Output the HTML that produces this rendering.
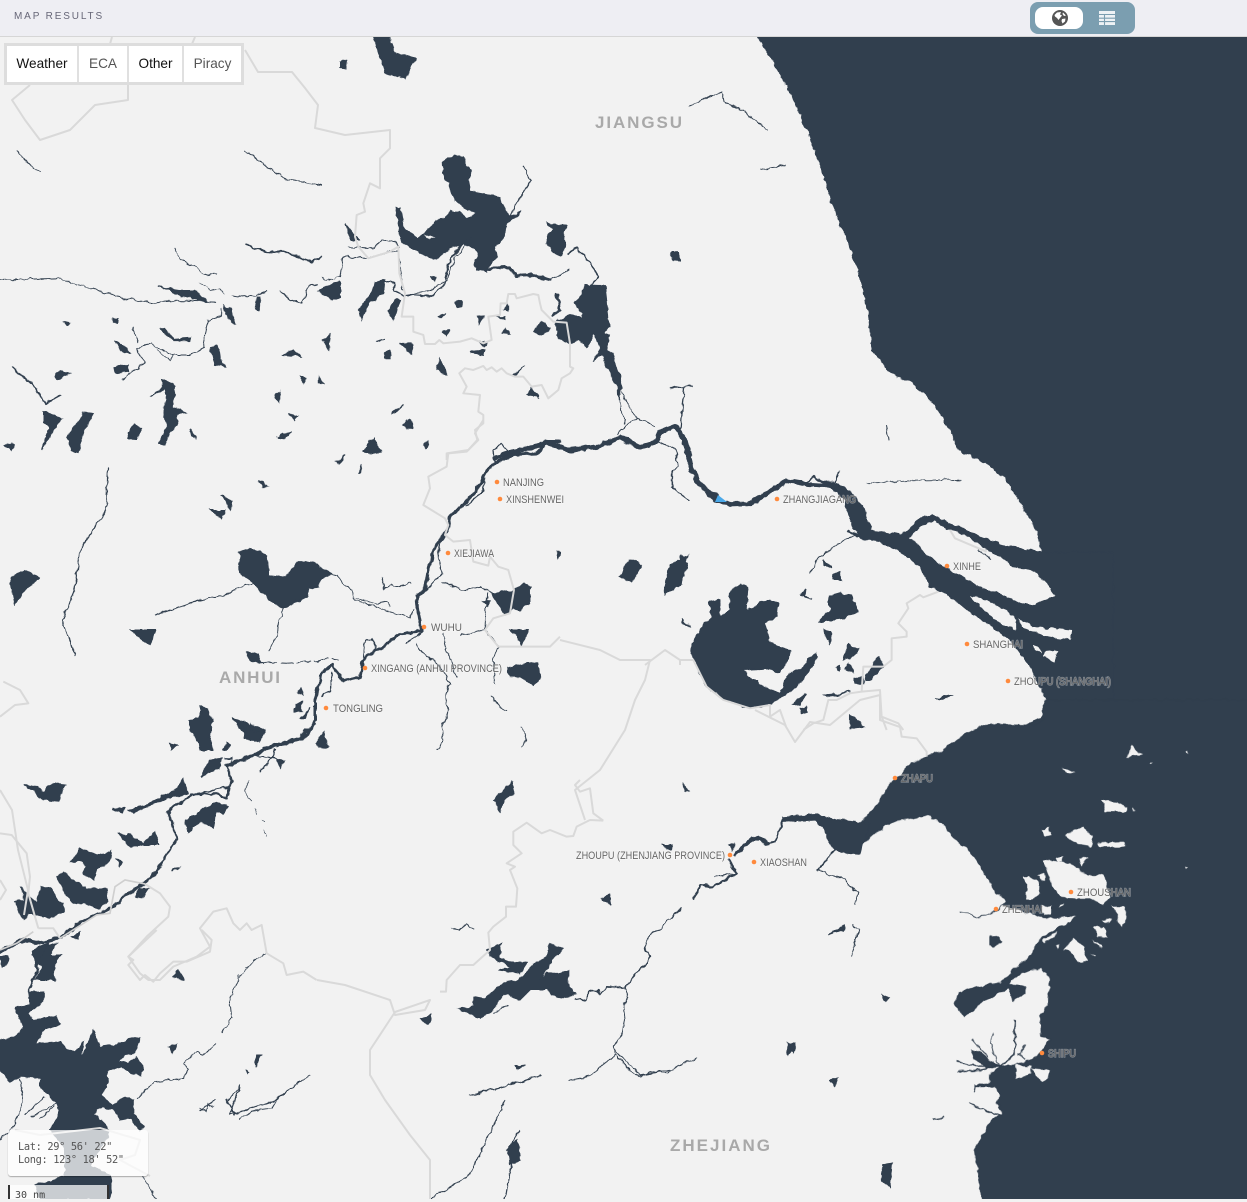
<!DOCTYPE html>
<html lang="en"><head><meta charset="utf-8"><title>Map Results</title>
<style>
html,body{margin:0;padding:0;width:1247px;height:1199px;overflow:hidden;background:#f2f2f2;font-family:"Liberation Sans",sans-serif}
svg.map{position:absolute;left:0;top:0}
.hdr{position:absolute;left:0;top:0;width:1247px;height:36px;background:#eeeef3;border-bottom:1px solid #d6d6d6}
.ttl{position:absolute;left:14px;top:11px;font-size:10px;line-height:12px;letter-spacing:1.85px;color:#667}
.tog{position:absolute;left:1030px;top:2px;width:105px;height:32px;background:#7b9eb0;border-radius:8px}
.pill{position:absolute;left:5px;top:5px;width:48px;height:22px;background:#fff;border-radius:8px}
.panel{position:absolute;left:4px;top:43px;width:240px;height:42px;box-sizing:border-box;background:#e0e0e0;border:3px solid #ddd}
.c{position:absolute;top:0;height:36px;background:#fff;text-align:center;font-size:13.6px;line-height:35px;color:#555}
.box{position:absolute;left:8px;top:1130px;width:140px;height:46px;box-sizing:border-box;background:rgba(255,255,255,.74);border-radius:3px;box-shadow:0 1px 1px rgba(0,0,0,.3);padding:11px 0 0 10px;font:10.35px/13px "DejaVu Sans Mono","Liberation Mono",monospace;letter-spacing:-.35px;color:#555;white-space:pre}
.sc{position:absolute;left:8px;top:1185px;width:101px;height:14px;box-sizing:border-box;background:rgba(255,255,255,.74);border-left:2px solid #333;border-right:2px solid #333;padding:5px 0 0 5px;font:10px/12px "DejaVu Sans Mono","Liberation Mono",monospace;color:#444}
.d path,.d circle{fill:#313f4e;stroke:#313f4e;stroke-width:1;vector-effect:non-scaling-stroke}
.d path *{vector-effect:non-scaling-stroke}
.l path{fill:#f2f2f2;stroke:none}
.r path{fill:none;stroke:#313f4e;stroke-linejoin:round;stroke-linecap:round}
.b path{fill:none;stroke:#d9d9d9;stroke-width:2;stroke-linejoin:round}
text.n{font-family:"Liberation Sans",sans-serif;font-size:11px;fill:#666;stroke:rgba(255,255,255,.4);stroke-width:1.3px;paint-order:stroke}
text.t{font-family:"Liberation Sans",sans-serif;font-weight:bold;font-size:17px;fill:#a9a9a9}
circle.o{fill:#ff8a3d}
</style></head><body>
<svg class="map" width="1247" height="1199" viewBox="0 0 1247 1199" xmlns="http://www.w3.org/2000/svg">
<defs><filter id="rough" filterUnits="userSpaceOnUse" x="-30" y="-30" width="1307" height="1259" color-interpolation-filters="sRGB"><feTurbulence type="fractalNoise" baseFrequency="0.14" numOctaves="2" seed="7" result="n"/><feDisplacementMap in="SourceGraphic" in2="n" scale="5" xChannelSelector="R" yChannelSelector="G"/></filter></defs>
<rect width="1247" height="1199" fill="#f2f2f2"/>

<g filter="url(#rough)">
<!-- open sea, absolute coordinates -->
<g class="d"><path d="M748 15 758 37 772 60 790 92 805 125 820 165 833 205 845 235 858 270 868 310 872 350 890 372 915 385 935 405 950 430 958 450 970 455 985 462 1005 478 1022 505 1035 528 1042 552 1100 552 1100 740 1280 740 1280 15z"/>
<path d="M664 595 670 565 688 555 680 585z"/><path d="M620 577 630 559 642 565 632 582z"/>
<path d="M368 25 385 25 395 52 415 58 405 79 385 72 378 50z"/><path d="M340 62 347 61 346 69 340 68z"/>
<path d="M671 252 680 252 679 261 672 260z"/>
<path d="M10 578 25 570 40 578 25 590 15 605z"/><path d="M130 630 155 630 150 645z"/></g>
<g class="r"><path stroke-width="1" d="M245 150 282 178 322 185"/><path stroke-width="1" d="M18 152 30 165 40 172"/>
<path stroke-width="1" d="M690 105 708 98 722 92 724 102 742 110 768 130"/><path stroke-width="1" d="M760 170 785 165"/>
<path stroke-width="1" d="M886 425 888 440"/>
<path stroke-width="1.2" d="M108 468 106 510 80 550 75 590 62 620 75 655M155 615 200 600"/>
<path stroke-width="5" d="M495 458 512 452 548 443 570 450 600 446 620 437 640 447 655 443 660 432 675 426 685 440 692 470 700 485 718 498"/>
<path stroke-width="1.3" d="M672 388 692 386M684 388 680 430"/><path stroke-width="1.2" d="M655 440 676 450 678 466 672 470 672 488 690 500"/>
</g>

<!-- zoom (0,240) north Anhui -->
<g transform="translate(0 240) scale(.3333)">
<g class="d"><path d="M475 140 540 150 585 150 625 185 540 170 510 150z"/><path d="M772 170 780 170 778 210 765 210z"/><path d="M955 155 1000 130 1020 125 1020 170 1000 180z"/><path d="M670 195 695 210 705 255 685 235z"/><path d="M480 268 495 265 520 295 570 292 570 302 520 302z"/><path d="M345 305 375 320 390 340 360 330z"/><path d="M342 380 385 375 388 395 345 400z"/><path d="M340 233 353 233 352 250 340 250z"/><path d="M192 245 210 248 200 256z"/><path d="M175 395 210 400 170 420 165 410z"/><path d="M132 512 185 535 155 580 125 630 150 565 132 550z"/><path d="M200 590 240 540 250 518 280 520 250 575 235 635 215 630z"/><path d="M380 595 400 555 425 565 408 597z"/><path d="M485 415 525 440 520 500 560 518 530 525 535 550 505 585 495 618 478 612 500 560 490 510 500 470 495 445 450 470 490 440z"/><path d="M630 320 650 315 665 365 677 380 645 375z"/><path d="M570 568 590 595 575 590z"/><path d="M25 610 40 612 35 630 15 615z"/><path d="M850 345 880 330 905 350z"/><path d="M900 410 918 415 910 428z"/><path d="M958 412 972 432 958 430z"/><path d="M825 475 838 455 838 488z"/><path d="M870 522 895 530 885 540z"/><path d="M832 595 850 577 868 580 855 598z"/><path d="M968 300 992 283 985 330z"/><path d="M1008 665 1020 660 1020 670z"/></g>
<g class="r"><path stroke-width="3" d="M0 120 170 115 370 175 450 188 540 182 650 185"/><path stroke-width="3" d="M525 28 540 55 590 85 615 105 650 100"/><path stroke-width="6" d="M740 15 800 35 860 38 935 65 965 50"/><path stroke-width="2" d="M600 128 630 150 660 145 675 163"/><path stroke-width="3" d="M698 165 745 172 800 155"/><path stroke-width="4" d="M840 152 880 185 905 192 925 140 950 133"/><path stroke-width="2" d="M965 110 990 120 1020 110"/><path stroke-width="3" d="M665 205 665 225 625 240 610 295 612 325 570 345 520 345 480 325 450 312 430 315 410 325 432 370 365 418M472 330 510 362 520 345M398 265 415 305"/><path stroke-width="5" d="M38 380 65 405 95 430 135 490 180 465"/></g>
</g>

<!-- zoom (680,460) estuary / Taihu -->
<g transform="translate(680 460) scale(.3333)">
<g class="d"><path d="M1085 277 1000 262 920 240 850 205 790 183 755 165 720 178 680 212 665 225 575 210 555 150 520 100 470 70 420 60 495 115 495 140 520 205 540 235 600 245 660 275 720 320 750 380 800 400 860 450 930 495 1000 550 1050 620 1075 670 1100 720 1095 760 1040 800 1300 800 1300 277z"/>
<path d="M30 565 60 510 95 470 90 425 120 420 118 470 150 450 148 400 180 372 205 385 200 450 240 430 270 422 295 430 290 470 255 490 265 540 280 555 330 570 325 600 295 640 270 625 190 630 215 660 235 660 250 680 300 700 325 640 370 625 385 595 410 578 415 590 390 630 350 680 300 715 250 738 190 742 130 715 80 680 45 610z"/>
<path d="M5 480 35 500 10 490z"/><path d="M365 405 395 415 375 410 378 385z"/><path d="M415 488 450 450 445 410 480 400 515 405 535 455 490 475 450 480z"/><path d="M432 510 455 510 450 550 435 530z"/><path d="M460 345 480 335 482 360 458 360z"/><path d="M430 300 455 322 432 315z"/><path d="M490 600 505 550 538 570 515 590z"/><path d="M555 660 575 620 595 590 610 620 570 660z"/><path d="M465 620 480 615 480 630z"/><path d="M495 630 505 610 520 635z"/><path d="M525 655 550 655 550 670 525 670z"/><path d="M430 708 510 695 440 712z"/><path d="M765 715 820 705 790 718z"/><path d="M335 735 375 700 360 735z"/><path d="M360 745 380 740 385 755 365 760z"/><path d="M0 285 22 310 10 350 0 350z"/><path d="M510 765 540 790 555 800 510 805z"/></g>
<g class="l"><path d="M690 230 730 195 765 182 800 205 830 212 880 240 920 270 970 295 1000 320 1060 330 1100 370 1125 405 1060 435 1030 435 960 400 900 380 840 345 800 325 760 300 720 262z"/>
<path d="M870 408 895 410 930 430 980 450 1010 480 1010 510 960 490 900 440z"/>
<path d="M1015 475 1060 500 1175 510 1170 540 1100 530 1030 505z"/><path d="M1060 555 1075 560 1085 580 1065 570z"/><path d="M1095 575 1135 570 1125 605 1090 590z"/></g>
<g class="r"><path stroke-width="14" d="M25 0 50 60 105 120 150 132 210 130 260 100 320 62 380 72 470 78"/><path stroke-width="5" d="M380 70 400 50 445 70M465 72 478 35"/><path stroke-width="2.5" d="M560 70 700 62 845 58"/><path stroke-width="3" d="M390 340 420 290 500 235 530 225"/><path stroke-width="6" d="M505 215 540 230"/><path stroke-width="3" d="M895 270 935 295"/></g>
</g>

<!-- zoom (900,720) bay, Zhoushan, Ningbo -->
<g transform="translate(900 720) scale(.3333)">
<g class="d"><path d="M430 0 400 15 300 15 250 18 195 40 125 95 75 110 20 140 0 165 -15 175 -60 240 -120 315 -186 390 -120 375 -45 315 0 300 40 295 85 285 130 315 180 370 220 405 260 470 290 520 320 545 310 555 420 590 470 595 530 585 510 610 470 625 430 650 405 680 400 700 340 750 310 780 300 790 235 800 180 815 165 850 175 875 195 890 240 850 300 815 325 805 340 840 375 820 375 798 325 795 350 765 420 745 450 770 445 850 420 890 425 950 450 960 420 1000 395 1020 345 1035 300 1040 270 1065 270 1090 225 1095 220 1120 225 1100 285 1100 300 1130 290 1150 310 1180 275 1200 225 1290 255 1500 1140 1500 1140 -60 430 -60z"/></g>
<g class="l"><path d="M685 105 695 75 710 95 730 100 700 105 680 115z"/><path d="M748 125 760 125 750 132z"/><path d="M858 95 865 90 865 102z"/><path d="M485 140 525 160 500 160z"/><path d="M605 240 650 245 680 262 680 275 615 275z"/><path d="M700 265 708 275 700 272z"/>
<path d="M425 330 445 322 455 345 435 350z"/><path d="M495 345 550 322 580 350 575 380 530 372z"/><path d="M595 368 670 365 675 380 600 380z"/><path d="M470 415 490 410 485 425 475 427z"/><path d="M535 415 565 410 545 440z"/>
<path d="M430 420 510 430 560 465 610 465 630 530 610 555 570 535 540 535 480 530 455 490 440 450z"/><path d="M370 470 385 470 415 490 420 525 380 540 380 490z"/><path d="M415 465 435 460 435 478 425 482z"/><path d="M425 555 455 560 455 585 430 585z"/><path d="M480 550 490 550 480 560z"/>
<path d="M635 560 670 560 680 580 670 620 655 605 650 580z"/><path d="M605 600 635 597 625 610z"/><path d="M580 620 610 622 622 655 595 648z"/><path d="M575 660 610 680 600 682z"/><path d="M570 700 590 710 585 712z"/><path d="M490 690 520 655 550 680 562 725 535 725 510 695z"/><path d="M470 680 478 672 475 690z"/><path d="M430 660 470 635 465 650 430 670z"/><path d="M855 440 862 442 858 447z"/>
<path d="M345 1035 395 1040 390 1060 350 1080z"/><path d="M395 1045 450 1050 445 1075 430 1085 410 1070z"/></g>
<g class="d"><path d="M268 650 290 648 303 665 280 682 268 675z"/><path d="M215 990 240 995 270 1020 300 1040 260 1045 225 1015z"/></g>
<g class="r"><path stroke-width="3" d="M178 575 205 578 230 595 280 578 320 545"/><path stroke-width="5" d="M300 1040 345 1000 345 900"/><path stroke-width="3" d="M300 1040 270 970 280 940M215 960 265 1010M355 1005 375 975M355 1000 375 1018"/><path stroke-width="4" d="M170 1025 230 1040 300 1040M175 1055 240 1050 300 1040"/><path stroke-width="4" d="M210 1150 260 1175 300 1185"/><path stroke-width="4" d="M100 1198 130 1192"/></g>
</g>

<!-- zoom (340,140) Hongze / Gaoyou -->
<g transform="translate(340 140) scale(.3333)">
<g class="d"><path d="M307 70 340 47 370 50 378 80 395 90 385 120 392 155 420 160 480 170 485 195 510 230 545 215 500 250 490 300 465 320 470 350 445 380 440 395 410 390 405 365 415 350 405 325 370 310 345 320 320 330 290 355 270 352 240 340 205 320 180 298 178 260 168 202 180 205 190 265 235 295 262 270 290 240 315 235 330 215 358 215 380 235 410 222 375 205 345 180 335 160 325 130 310 100z"/>
<path d="M735 435 795 437 800 480 807 560 790 580 810 585 765 585 760 580 740 620 715 600 690 612 665 600 650 585 650 540 690 525 725 535 730 520 702 490 718 475z"/>
<path d="M765 585 780 630 760 665 785 640 800 680 833 740 835 785 845 725 825 660 820 640 800 630 810 585z"/>
<path d="M620 248 680 255 670 290 678 310 665 345 645 340 620 310 625 285 640 270z"/>
<path d="M55 510 100 450 105 425 135 420 130 460 85 490 65 540z"/><path d="M145 510 165 480 180 480 170 515 160 540z"/>
<path d="M270 410 290 412 280 425z"/><circle cx="356" cy="492" r="11"/>
<path d="M295 530 318 518 305 530z"/><path d="M310 575 328 570 318 590z"/><path d="M412 530 433 528 420 552z"/><path d="M490 510 503 495 503 513z"/><path d="M470 530 498 530 495 540z"/><path d="M485 580 510 582 495 565z"/><path d="M388 635 435 630 430 645 390 640z"/><path d="M420 605 440 608 430 620z"/><path d="M578 575 605 545 630 565 605 585z"/><path d="M108 603 135 595 120 602z"/><path d="M130 640 150 630 152 655 135 655z"/><path d="M180 610 215 610 218 640 195 625z"/><path d="M290 690 300 655 320 705z"/><path d="M515 705 550 678 530 700z"/><path d="M562 765 575 745 595 772 570 768z"/><path d="M153 822 188 798 170 815z"/><path d="M188 855 210 838 218 865 200 865z"/><path d="M250 915 265 905 258 925z"/><path d="M72 935 85 900 105 905 122 930 95 940z"/><path d="M993 340 1015 333 1018 360 1000 362z"/><path d="M15 250 35 275 55 300 30 300z"/></g>
<g class="l"><path d="M250 282 285 295 268 298z"/></g>
<g class="r"><path stroke-width="9" d="M445 385 510 382 530 408 575 405 630 420"/><path stroke-width="3" d="M630 420 690 390"/><path stroke-width="4" d="M550 82 572 125 530 190 512 230"/><path stroke-width="5" d="M685 340 710 325 745 360 775 410 750 440"/><path stroke-width="8" d="M650 465 660 510 640 525"/>
<path stroke-width="5" d="M135 425 160 430 165 450 190 470 225 465 270 470 310 440 330 360 370 305 395 295"/><path stroke-width="3" d="M225 460 270 450 320 420 345 350 390 300"/><path stroke-width="3" d="M25 320 100 325 125 300 165 305 178 320M0 410 10 350 80 355 150 335 175 335 190 450"/>
<path stroke-width="3" d="M835 770 855 850M845 755 885 830 945 860M830 880 890 835"/><path stroke-width="2" d="M993 742 1020 740"/></g>
</g>

<!-- zoom (200,420) Wuhu -->
<g transform="translate(200 420) scale(.3333)">
<g class="d"><path d="M118 395 150 385 200 405 205 465 260 472 295 425 340 425 395 460 360 480 355 500 325 510 320 530 250 565 205 540 165 495 120 460z"/>
<path d="M875 520 940 510 975 490 990 500 990 550 960 570 940 565 915 585 895 550z"/>
<path d="M920 745 970 735 980 725 1015 730 1020 780 1000 795 960 770 930 770z"/>
<path d="M140 695 175 705 190 730 150 720z"/><path d="M930 630 985 630 965 675 950 650z"/>
<path d="M610 15 635 25 620 0z"/><path d="M232 50 268 38 255 55z"/><path d="M490 95 520 60 540 95 510 100z"/><path d="M410 125 435 105 420 130z"/><path d="M475 160 485 135 480 160z"/><path d="M175 180 205 200 190 200z"/><path d="M30 270 75 270 65 295z"/><path d="M65 225 95 245 90 270z"/><path d="M670 78 685 68 680 82z"/><path d="M1068 395 1080 400 1075 415z"/>
<path d="M0 860 25 900 40 905 25 950 35 990 0 990z"/><path d="M95 890 140 925 150 910 195 930 180 965 135 945z"/><path d="M300 805 310 830 295 815z"/><path d="M285 850 305 845 305 875 285 875z"/><path d="M300 895 330 865 315 895z"/><path d="M350 970 370 935 385 980 355 985z"/><path d="M850 545 868 545 862 558z"/></g>
<g class="r"><path stroke-width="10" d="M1080 65 1045 65 1010 100 940 103 885 130 860 155 830 210 780 265 750 290 745 320 725 355 700 390 685 450 675 510 650 530 655 580 665 630"/>
<path stroke-width="4" d="M885 125 880 90 905 72 930 100M850 170 850 215 800 255M725 350 715 400 725 460 665 525"/>
<path stroke-width="9" d="M665 635 600 640 550 680 520 695 490 720 480 770 430 785 395 735 365 760 345 840 345 900 325 945 250 975 190 985"/>
<path stroke-width="4" d="M490 720 495 665 515 655 525 685M665 640 620 668M395 760 395 810 365 825"/>
<path stroke-width="3" d="M395 460 415 465 430 490 460 510 465 540 630 595 640 570M470 535 530 550 560 545 570 560M545 472 555 500 550 508 575 495 600 500 630 490M0 540 80 522 100 510 160 490M250 565 235 610 232 650 205 695M725 485 790 510 840 500 875 520M860 520 855 630 780 645M855 630 895 680 880 720 885 790M650 670 665 700 700 720 720 740 750 790 735 830 745 870 725 920 730 960 710 990M730 640 735 670 740 690 760 740 770 770M875 830 900 860 920 870M965 920 980 960 965 980"/>
<path stroke-width="3" stroke-dasharray="40 12" d="M190 727 260 730 350 722 380 715 415 720"/></g>
</g>

<!-- zoom (0,680) middle Yangtze -->
<g transform="translate(0 680) scale(.3333)">
<g class="d"><path d="M45 665 75 660 60 620 75 640 110 670 125 620 150 625 175 660 190 670 190 695 150 715 85 700 70 720 55 700z"/>
<path d="M170 590 190 575 215 600 260 625 320 625 325 665 300 685 250 670 220 670 195 640z"/>
<path d="M210 545 240 505 290 525 335 510 330 545 290 570 280 600 250 580 260 560 235 540z"/>
<path d="M355 460 390 465 430 490 465 455 478 495 425 495 395 503 370 480z"/>
<path d="M72 315 115 320 130 340 155 310 195 315 175 365 130 360 100 330z"/>
<path d="M605 290 630 240 665 235 655 270 625 275z"/><path d="M570 120 600 115 605 78 625 90 640 125 625 170 640 210 600 210 595 185 570 150z"/><path d="M695 110 740 130 760 155 795 150 775 185 735 175 740 150 710 125z"/><path d="M670 210 680 185 690 195 680 212z"/><path d="M510 190 535 195 515 210z"/><path d="M555 420 590 405 600 395 640 370 685 380 670 400 650 395 640 445 600 425 565 455z"/><path d="M830 238 852 240 840 262z"/><path d="M405 650 420 625 445 625 425 655z"/><path d="M515 573 540 560 535 568z"/><path d="M350 540 370 545 360 560z"/><path d="M215 770 240 755 235 780z"/><path d="M0 830 25 825 20 855 5 860z"/><path d="M95 825 130 800 170 790 150 825 185 825 160 860 165 900 105 900 125 860z"/>
<path d="M385 390 440 375 480 350 530 330 550 295 565 340 520 350 470 370 440 380 400 400z"/><path d="M338 385 375 385 370 400z"/></g>
<g class="r"><path stroke-width="11" d="M945 130 900 175 800 205 740 235 685 255"/><path stroke-width="7" d="M680 255 695 300 680 355 645 340 575 345 505 390 520 440 530 480 495 530 470 575"/><path stroke-width="10" d="M470 575 435 610 385 640 340 680 290 705 245 725 180 775 120 790 70 780 0 815"/>
<path stroke-width="4" d="M675 235 695 235 690 255M575 345 660 325 690 320M510 385 540 370M765 225 830 238M780 275 815 235 825 210"/><path stroke-width="2" d="M750 305 732 330 755 365M765 385 770 405M785 420 795 425M790 450 800 468M720 895 745 860 790 825"/></g>
</g>

<!-- zoom (0,930) west Zhejiang lake -->
<g transform="translate(0 930) scale(.3333)">
<g class="d"><path d="M100 60 145 40 120 85 110 130 85 185 130 185 130 215 85 250 100 270 170 258 180 280 130 300 110 340 180 335 190 350 225 370 250 335 245 385 280 300 300 350 330 345 350 345 390 325 420 325 405 370 375 375 355 395 385 400 410 380 430 410 425 435 395 430 360 410 320 425 325 450 305 500 340 525 370 500 400 510 400 550 430 590 420 600 395 565 360 570 340 540 305 530 280 550 330 600 300 660 270 705 330 738 336 790 330 807 120 807 105 765 195 738 195 660 150 600 180 545 170 520 120 470 120 445 60 440 30 455 0 420 0 330 50 320 70 290 45 235 90 220 85 180 110 120 95 60z"/>
<path d="M520 140 535 120 552 148z"/><path d="M505 350 530 340 520 370z"/><path d="M770 375 785 375 765 415z"/><path d="M735 420 745 430 740 435z"/></g>
<g class="r"><path stroke-width="3" d="M410 505 465 455 550 445 565 420 550 400 590 365 610 375 650 340M665 305 695 265 690 215 720 135M600 535 620 545 625 520 640 530M720 565 770 540 815 535 830 510 900 455"/><path stroke-width="5" d="M680 510 705 555"/><path stroke-width="3" d="M685 510 720 470M60 445 70 515 40 590 0 630M75 550 130 505M95 560 170 520M120 565 160 530M430 740 470 807"/><path stroke-width="3" stroke-dasharray="12 22" d="M735 115 795 70"/></g>
</g>

<!-- zoom (440,780) Qiandao / Qiantang -->
<g transform="translate(440 780) scale(.3333)">
<g class="d"><path d="M55 685 100 680 100 650 135 655 190 610 235 600 290 545 320 530 330 490 370 505 340 535 300 600 320 580 360 580 385 570 385 610 405 640 360 655 320 630 270 630 240 660 190 640 160 690 120 715z"/>
<path d="M140 510 185 490 175 530 205 545 260 550 240 580 175 570 215 560 165 540z"/>
<path d="M1190 120 1130 103 1030 110 1010 170 990 190 960 170 930 175 880 225 885 228 930 190 955 178 980 195 1005 185 1030 125 1130 120 1150 140 1175 205 1200 215 1260 220 1290 130z"/>
<path d="M665 195 700 195 695 210 680 202z"/><path d="M865 195 885 190 880 208z"/><path d="M485 355 512 345 508 372 487 360z"/><path d="M730 15 748 30 735 35z"/><path d="M160 62 180 40 215 5 222 40 190 60 180 95z"/><path d="M228 860 258 855 232 870z"/><path d="M1040 790 1065 800 1045 825z"/><path d="M1165 465 1215 435 1215 450 1180 460z"/></g>
<g class="r"><path stroke-width="4" d="M405 655 440 662 445 635 475 630 480 645 500 620 555 622 580 590 615 555 630 530 615 505 625 470 660 445 690 415 725 385"/><path stroke-width="7" d="M760 355 780 315 820 320 870 290 890 280 865 240"/><path stroke-width="3" d="M555 625 565 650 550 680 555 720 545 765 520 800 530 825 490 850 450 890 390 900M530 825 570 875 600 890 630 875 680 880 720 855 770 835M825 290 885 280"/><path stroke-width="5" d="M1185 210 1135 268"/><path stroke-width="3" d="M1135 268 1170 290 1205 290 1230 320 1255 335 1245 375M1240 435 1255 450 1235 530M35 445 60 450 80 430 100 450M160 700 205 675"/></g>
</g>

<!-- small rivers bottom centre -->
<g class="r"><path stroke-width="1.2" d="M470 1095 510 1085 540 1075M430 1199 470 1175 505 1100M505 1199 512 1165M507 1150 520 1130M615 1050 640 1075 670 1070M240 1085 230 1115 275 1100 310 1075M200 1110 215 1100"/></g>
<g class="d"><path d="M882 1165 892 1163 890 1187 883 1180z"/><path d="M788 1045 796 1043 793 1052z"/><path d="M830 1080 838 1078 835 1086z"/><path d="M508 1145 518 1140 520 1160 510 1165z"/><path d="M420 1018 432 1015 428 1025z"/><path d="M882 995 890 998 885 1002z"/></g>
</g>

<!-- borders -->
<g class="b">
<g transform="translate(340 140) scale(.3333)"><path style="stroke-width:6" d="M150 0 150 25 120 55 120 145 90 130 70 190 75 215 50 225 45 290 55 320 85 355 150 335 175 320 178 400 195 460 185 530 220 530 220 575 250 585 255 612 285 612 298 600 310 610 360 605 395 595 430 610 455 600 445 530 480 525 482 490 500 490 505 462 525 462 530 475 580 462 595 465 600 490 605 510 640 545 680 548 690 610 690 680 700 685 690 700 665 715 655 750 625 775 605 735 575 740 550 710 525 710 500 700 485 685 470 695 455 682 440 690 430 678 400 690 375 685 358 700 380 740 370 760 420 765 415 815 430 825 430 850 405 870 412 900 385 930 320 940 320 960"/></g>
<path d="M245 50 258 72 292 72 305 88 318 105 315 128 345 135 390 130 390 140"/>
<path d="M128 85 128 100 95 105 70 130 40 140 25 120 12 100 30 85M112 37 110 44M195 37 192 44"/>
<g transform="translate(200 420) scale(.3333)"><path style="stroke-width:6" d="M850 0 825 40 835 60 800 95 745 100 740 140 685 170 690 205 670 255 735 295 745 315 735 345 760 365 810 360 820 425 865 437 870 410 895 440 925 450 942 510 930 580 880 595 855 630 895 680 1050 680 1080 650"/></g>
<path d="M560 640 600 650 620 660 650 660 645 680 635 700 625 730 600 770 575 790 585 820"/>
<g transform="translate(680 460) scale(.3333)"><path style="stroke-width:6" d="M0 600 40 600 80 680 130 720 210 745 270 735 270 770 300 750 318 800M370 810 400 790 430 780 445 720 470 720 510 700 545 695 550 620 610 620 635 600 635 535 680 530 680 515 655 490 685 445 680 430 720 405 730 412 775 395M545 695 600 690 605 770 620 810M605 770 655 790 670 810M810 210 825 235 920 275"/></g>
<path d="M645 665 665 650 680 660 680 665M900 727 880 720 880 695 860 700 830 725 810 722 795 742 785 725 755 710"/>
<g transform="translate(900 720) scale(.3333)"><path style="stroke-width:6" d="M0 20 5 50 50 55 80 95 80 110"/></g>
<g transform="translate(440 780) scale(.3333)"><path style="stroke-width:6" d="M490 122 460 100 450 25 420 35 405 15 420 0M490 122 450 120 410 140 400 168 380 170 330 150 305 160 260 128 220 155 220 195 245 220 200 250 225 260 210 270 232 325 228 380 198 380 198 410 160 440 145 458 150 510 100 555 60 555 20 600 18 635 0 635"/></g>
<g transform="translate(0 680) scale(.3333)"><path style="stroke-width:6" d="M10 5 60 30 85 70 45 75 0 110M0 460 35 465 80 520 90 590 85 640 115 745M115 745 160 745 180 775"/>
<path style="stroke-width:5;stroke:#cfcfcf" d="M0 810 50 790 100 755M180 775 290 705 330 700 345 620 375 600 435 612"/>
<path style="stroke-width:6" d="M435 612 480 640 510 680 505 710 440 770 385 830 420 880 445 900 480 900 520 860 590 830 630 800 600 745 640 695 680 685 700 730 720 750 740 730 755 750 785 735 800 820 850 850 860 885 910 875 950 900"/></g>
<g transform="translate(0 930) scale(.3333)"><path style="stroke-width:6" d="M470 0 385 80 400 90 385 105 420 150 435 135 460 155 480 130 520 95 560 95 630 65 635 30 605 0"/></g>
<path d="M317 980 345 985 390 1000 395 1015 425 1010 430 1000 395 1012 370 1050 370 1075 385 1100 410 1135 430 1160 430 1199"/>
<path d="M0 790 12 810 18 850 28 890 24 915M0 880 6 890 0 900"/>
<path d="M15 1130 40 1135 100 1128 140 1140 135 1155 120 1160 150 1176"/>
</g>

<!-- blue vessel marker -->
<path d="M715 502 718 495 727 502z" fill="#4aa8e8"/>

<!-- titles -->
<text class="t" x="595" y="128" textLength="87" lengthAdjust="spacing">JIANGSU</text>
<text class="t" x="219" y="683" textLength="61" lengthAdjust="spacing">ANHUI</text>
<text class="t" x="670" y="1151" textLength="100" lengthAdjust="spacing">ZHEJIANG</text>

<!-- ports -->
<g>
<circle class="o" cx="497" cy="482" r="2.3"/><text class="n" x="503" y="486" textLength="41" lengthAdjust="spacingAndGlyphs">NANJING</text>
<circle class="o" cx="500" cy="499" r="2.3"/><text class="n" x="506" y="503" textLength="58" lengthAdjust="spacingAndGlyphs">XINSHENWEI</text>
<circle class="o" cx="448" cy="553" r="2.3"/><text class="n" x="454" y="557" textLength="40" lengthAdjust="spacingAndGlyphs">XIEJIAWA</text>
<circle class="o" cx="424" cy="627" r="2.3"/><text class="n" x="431" y="631" textLength="31" lengthAdjust="spacingAndGlyphs">WUHU</text>
<circle class="o" cx="365" cy="668" r="2.3"/><text class="n" x="371" y="672" textLength="131" lengthAdjust="spacingAndGlyphs">XINGANG (ANHUI PROVINCE)</text>
<circle class="o" cx="326" cy="708" r="2.3"/><text class="n" x="333" y="712" textLength="50" lengthAdjust="spacingAndGlyphs">TONGLING</text>
<circle class="o" cx="777" cy="499" r="2.3"/><text class="n" x="783" y="503" textLength="73" lengthAdjust="spacingAndGlyphs">ZHANGJIAGANG</text>
<circle class="o" cx="947" cy="566" r="2.3"/><text class="n" x="953" y="570" textLength="28" lengthAdjust="spacingAndGlyphs">XINHE</text>
<circle class="o" cx="967" cy="644" r="2.3"/><text class="n" x="973" y="648" textLength="50" lengthAdjust="spacingAndGlyphs">SHANGHAI</text>
<circle class="o" cx="1008" cy="681" r="2.3"/><text class="n" x="1014" y="685" textLength="97" lengthAdjust="spacingAndGlyphs">ZHOUPU (SHANGHAI)</text>
<circle class="o" cx="895" cy="778" r="2.3"/><text class="n" x="901" y="782" textLength="32" lengthAdjust="spacingAndGlyphs">ZHAPU</text>
<circle class="o" cx="730" cy="855" r="2.3"/><text class="n" x="576" y="859" textLength="149" lengthAdjust="spacingAndGlyphs">ZHOUPU (ZHENJIANG PROVINCE)</text>
<circle class="o" cx="754" cy="862" r="2.3"/><text class="n" x="760" y="866" textLength="47" lengthAdjust="spacingAndGlyphs">XIAOSHAN</text>
<circle class="o" cx="1071" cy="892" r="2.3"/><text class="n" x="1077" y="896" textLength="54" lengthAdjust="spacingAndGlyphs">ZHOUSHAN</text>
<circle class="o" cx="996" cy="909" r="2.3"/><text class="n" x="1002" y="913" textLength="41" lengthAdjust="spacingAndGlyphs">ZHENHAI</text>
<circle class="o" cx="1042" cy="1053" r="2.3"/><text class="n" x="1048" y="1057" textLength="28" lengthAdjust="spacingAndGlyphs">SHIPU</text>
</g>
</svg>

<div class="hdr"><div class="ttl">MAP RESULTS</div>
<div class="tog"><div class="pill"></div>
<svg style="position:absolute;left:21px;top:7px" width="18" height="18" viewBox="0 0 18 18"><circle cx="9" cy="9" r="8" fill="#555"/><path d="M6 3.5 10 3 9 5.5 11 6.5 9 9 7.5 11 6 9 4 7.5 3.5 6zM11 10 14.5 9.5 14 12.5 11.5 14.5 10.5 12zM12 3.5 15 6.5 13 7 11.5 5z" fill="#fff"/></svg>
<svg style="position:absolute;left:69px;top:9px" width="16" height="14" viewBox="0 0 16 14"><rect width="16" height="14" fill="#eef2f5"/><path d="M0 3.5H16M0 7.2H16M0 10.6H16M5.5 3.5V14" stroke="#7b9eb0" stroke-width="1.1"/></svg>
</div></div>

<div class="panel">
<div class="c" style="left:0;width:70px;color:#111">Weather</div>
<div class="c" style="left:72px;width:48px">ECA</div>
<div class="c" style="left:122px;width:53px;color:#111">Other</div>
<div class="c" style="left:177px;width:57px">Piracy</div>
</div>

<div class="box">Lat: 29° 56' 22"
Long: 123° 18' 52"</div>
<div class="sc">30 nm</div>
</body></html>
